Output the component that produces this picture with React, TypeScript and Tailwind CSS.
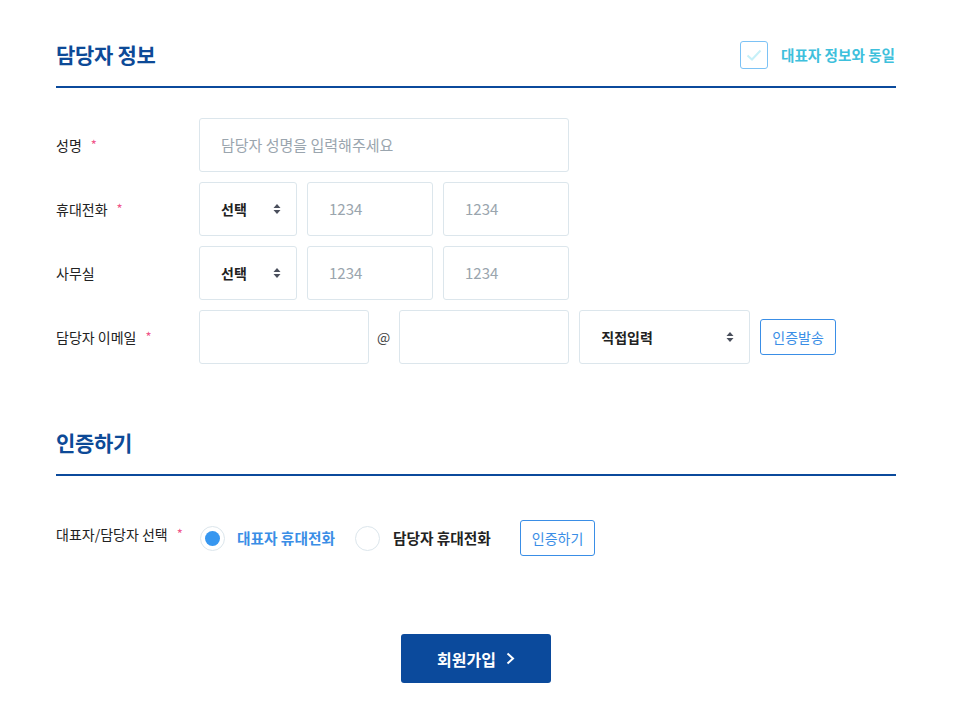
const font = { fontFamily: '"Noto Sans CJK KR", "Noto Sans", sans-serif' }

const Star = () => <span className="ml-[9px] text-[13px] text-[#f0568a]">*</span>

const Arrows = () => (
  <svg width="8" height="12" viewBox="0 0 8 12" className="shrink-0">
    <path d="M4 1 L7.5 5 H0.5 Z" fill="#4a4f5c" />
    <path d="M4 11 L7.5 7 H0.5 Z" fill="#4a4f5c" />
  </svg>
)

const Field = ({ w, placeholder }: { w: string; placeholder?: string }) => (
  <div
    className={`${w} h-[54px] shrink-0 rounded-[3px] border border-[#dce6ec] flex items-center px-[21px] text-[15px] text-[#9aa5ae]`}
  >
    {placeholder}
  </div>
)

const Select = ({ w, text }: { w: string; text: string }) => (
  <div
    className={`${w} h-[54px] shrink-0 rounded-[3px] border border-[#dce6ec] flex items-center justify-between pl-[21px] pr-[15px] text-[14px] font-bold text-[#222]`}
  >
    <span>{text}</span>
    <Arrows />
  </div>
)

const Row = ({ label, star, children }: { label: string; star?: boolean; children: React.ReactNode }) => (
  <div className="flex items-center h-[54px]">
    <div className="w-[143px] shrink-0 text-[14px] text-[#222] flex items-center">
      {label}
      {star && <Star />}
    </div>
    <div className="flex items-center gap-[10px]">{children}</div>
  </div>
)

export default function App() {
  return (
    <div className="w-[961px] h-[721px] bg-white" style={font}>
      <div className="pl-[56px] w-[896px] pt-[38px]">
        <div className="flex items-center justify-between h-[34px]">
          <h2 className="text-[21px] font-bold text-[#0d4a97] tracking-[-0.3px]">담당자 정보</h2>
          <div className="flex items-center gap-[13px] pr-[1px]">
            <div className="w-[28px] h-[28px] rounded-[3px] border-[1.5px] border-[#7cc2f5] flex items-center justify-center">
              <svg width="16" height="12" viewBox="0 0 16 12">
                <path d="M1.5 6.5 L6 10.5 L14.5 1.5" fill="none" stroke="#c6f0f8" strokeWidth="2" />
              </svg>
            </div>
            <span className="text-[14.6px] font-bold text-[#3ec0dc]">대표자 정보와 동일</span>
          </div>
        </div>
        <div className="h-[2px] bg-[#0b4a9c] mt-[14px]" />

        <div className="mt-[30px] flex flex-col gap-[10px]">
          <Row label="성명" star>
            <Field w="w-[370px]" placeholder="담당자 성명을 입력해주세요" />
          </Row>
          <Row label="휴대전화" star>
            <Select w="w-[98px]" text="선택" />
            <Field w="w-[126px]" placeholder="1234" />
            <Field w="w-[126px]" placeholder="1234" />
          </Row>
          <Row label="사무실">
            <Select w="w-[98px]" text="선택" />
            <Field w="w-[126px]" placeholder="1234" />
            <Field w="w-[126px]" placeholder="1234" />
          </Row>
          <Row label="담당자 이메일" star>
            <Field w="w-[170px]" />
            <span className="text-[14px] text-[#444] ml-[-2px] mr-[-1px]">@</span>
            <Field w="w-[170px]" />
            <Select w="w-[171px]" text="직접입력" />
            <button className="h-[36px] px-[11px] rounded-[3px] border border-[#3a8ee6] text-[14px] text-[#3a8ee6]">
              인증발송
            </button>
          </Row>
        </div>

        <div className="mt-[62px] h-[34px] flex items-center">
          <h2 className="text-[21px] font-bold text-[#0d4a97] tracking-[-0.3px]">인증하기</h2>
        </div>
        <div className="h-[2px] bg-[#0b4a9c] mt-[14px]" />

        <div className="mt-[44px] flex items-center h-[36px]">
          <div className="w-[144px] shrink-0 text-[14px] text-[#222] flex items-center -mt-[8px]">
            대표자/담당자 선택
            <Star />
          </div>
          <div className="flex items-center">
            <div className="w-[25px] h-[25px] rounded-full border border-[#dce6ec] flex items-center justify-center">
              <div className="w-[15px] h-[15px] rounded-full bg-[#3797f0]" />
            </div>
            <span className="ml-[12px] text-[14.7px] font-bold text-[#3a8ee6]">대표자 휴대전화</span>
            <div className="ml-[20px] w-[25px] h-[25px] rounded-full border border-[#dce6ec]" />
            <span className="ml-[13px] text-[14.7px] font-bold text-[#222]">담당자 휴대전화</span>
            <button className="ml-[29px] h-[36px] px-[11px] rounded-[3px] border border-[#3a8ee6] text-[14px] text-[#3a8ee6]">
              인증하기
            </button>
          </div>
        </div>

        <div className="mt-[78px] flex justify-center">
          <button className="w-[150px] h-[49px] rounded-[3px] bg-[#0b4a9c] text-white text-[16px] font-bold flex items-center justify-center gap-[10px]">
            회원가입
            <svg width="9" height="13" viewBox="0 0 9 13">
              <path d="M1.5 1.5 L7 6.5 L1.5 11.5" fill="none" stroke="white" strokeWidth="2" />
            </svg>
          </button>
        </div>
      </div>
    </div>
  )
}
